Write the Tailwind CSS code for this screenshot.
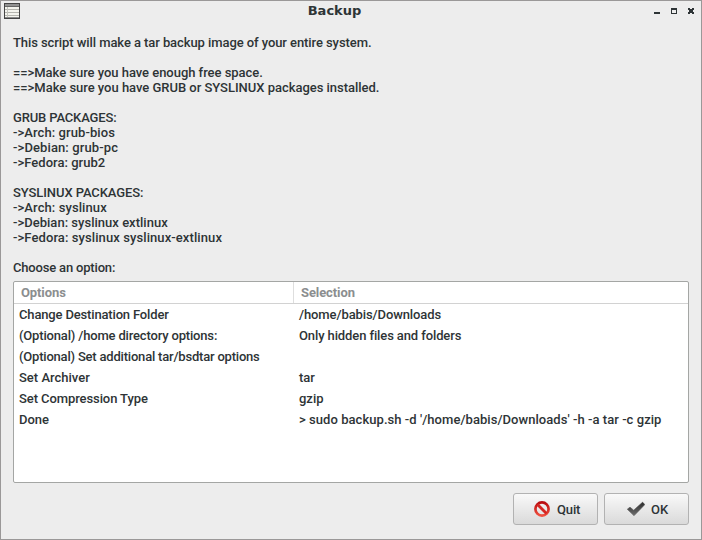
<!DOCTYPE html>
<html lang="en">
<head>
<meta charset="utf-8">
<title>Backup</title>
<script src="https://cdn.jsdelivr.net/npm/@tailwindcss/browser@4"></script>
</head>
<body class="w-[702px] h-[540px] overflow-hidden font-[Roboto,sans-serif] font-medium text-[13px] leading-[15px] text-[#2e3436]">
<div class="w-[702px] h-[540px] bg-[#ededed] border border-[#9a9898] flex flex-col">
  <header class="h-[34px] shrink-0 flex justify-between items-start">
    <svg class="ml-[3px] mt-[2px] w-4 h-4" viewBox="0 0 16 16" shape-rendering="crispEdges">
      <rect width="16" height="16" fill="#444"/>
      <rect x="1" y="1" width="14" height="2" fill="#929292"/>
      <rect x="1" y="3" width="14" height="1" fill="#666"/>
      <rect x="1" y="4" width="14" height="10" fill="#f4f4ee"/>
      <path d="M1 6.5h14M1 9.5h14M1 12.5h14" stroke="#b5b5af"/><path d="M3.5 4v10" stroke="#c4c4be"/>
      <path d="M1 14.5h14" stroke="#8a8a8a"/>
    </svg>
    <h1 class="font-['DejaVu_Sans',sans-serif] font-bold text-[13px] leading-[20px] pr-[5px]">Backup</h1>
    <div class="flex gap-[11px] mt-[7px] mr-[7px]">
      <svg class="w-[6px] h-[6px]" viewBox="0 0 6 6" shape-rendering="crispEdges"><path d="M0 4h6v2H0z" fill="#2e3436"/></svg>
      <svg class="w-[6px] h-[6px]" viewBox="0 0 6 6" shape-rendering="crispEdges"><path d="M0 0h6v6H0zM1 2v3h4V2z" fill="#2e3436" fill-rule="evenodd"/></svg>
      <svg class="w-[6px] h-[6px]" viewBox="0 0 6 6" shape-rendering="crispEdges"><path d="M0 0h2v1h2V0h2v2H5v2h1v2H4V5H2v1H0V4h1V2H0z" fill="#2e3436"/></svg>
    </div>
  </header>
  <main class="px-3 flex flex-col">
    <div class="whitespace-nowrap h-[240px] grid auto-rows-[15px]">
      <p class="tracking-[-0.077px]">This script will make a tar backup image of your entire system.</p>
      <p></p>
      <p class="tracking-[-0.035px]">==&gt;Make sure you have enough free space.</p>
      <p class="tracking-[-0.025px]">==&gt;Make sure you have GRUB or SYSLINUX packages installed.</p>
      <p></p>
      <p class="tracking-[-0.15px]">GRUB PACKAGES:</p>
      <p class="tracking-[0.08px]">-&gt;Arch: grub-bios</p>
      <p class="tracking-[0.11px]">-&gt;Debian: grub-pc</p>
      <p class="tracking-[0.03px]">-&gt;Fedora: grub2</p>
      <p></p>
      <p class="tracking-[-0.09px]">SYSLINUX PACKAGES:</p>
      <p class="tracking-[0.09px]">-&gt;Arch: syslinux</p>
      <p class="tracking-[0.02px]">-&gt;Debian: syslinux extlinux</p>
      <p class="tracking-[0.09px]">-&gt;Fedora: syslinux syslinux-extlinux</p>
      <p></p>
      <p class="tracking-[-0.18px]">Choose an option:</p>
    </div>
    <section class="mt-[6px] h-[202px] bg-white border border-[#a4a6a4] rounded-[2px]">
      <div class="h-[22px] border-b border-[#d2d2d2] flex text-[#8b8e8f] font-bold leading-[21px] tracking-[-0.1px]">
        <div class="w-[280px] pl-[7px] border-r border-[#dedede]">Options</div><div class="pl-[7px]">Selection</div>
      </div>
      <div class="grid grid-cols-[280px_1fr] auto-rows-[21px] leading-[21px] pl-[5px] whitespace-nowrap">
        <div class="tracking-[-0.16px]">Change Destination Folder</div><div class="tracking-[-0.1px]">/home/babis/Downloads</div>
        <div class="tracking-[-0.17px]">(Optional) /home directory options:</div><div class="tracking-[-0.11px]">Only hidden files and folders</div>
        <div class="tracking-[-0.2px]">(Optional) Set additional tar/bsdtar options</div><div></div>
        <div>Set Archiver</div><div>tar</div>
        <div class="tracking-[-0.09px]">Set Compression Type</div><div>gzip</div>
        <div>Done</div><div class="tracking-[0.05px]">&gt; sudo backup.sh -d '/home/babis/Downloads' -h -a tar -c gzip</div>
      </div>
    </section>
    <div class="mt-[10px] flex justify-end gap-[6px]">
      <button class="w-[85px] h-[32px] flex items-center pl-[20px] border border-[#b2b2b2] rounded-[3px] bg-linear-to-b from-[#f9f9f9] to-[#dadada]">
        <svg class="w-4 h-4 mr-[7px]" viewBox="0 0 16 16"><defs><linearGradient id="r" x2="0" y2="1"><stop stop-color="#b80c10"/><stop offset="1" stop-color="#f05040"/></linearGradient></defs><circle cx="8" cy="8" r="6.6" fill="none" stroke="url(#r)" stroke-width="2.7"/><path d="M3.5 3.5l9 9" stroke="#d42622" stroke-width="2.8"/></svg>
        <span class="tracking-[-0.15px]">Quit</span>
      </button>
      <button class="w-[85px] h-[32px] flex items-center pl-[22px] border border-[#b2b2b2] rounded-[3px] bg-linear-to-b from-[#f9f9f9] to-[#dadada]">
        <svg class="w-[18px] h-4 mr-[6px]" viewBox="0 0 18 16"><defs><linearGradient id="k" x2="0" y2="1"><stop stop-color="#2c2c2c"/><stop offset="1" stop-color="#707070"/></linearGradient></defs><path d="M0.3 8.2L3 6.2 6.7 9.2 15.6 1.2 17.8 3.6 7 14.8z" fill="url(#k)" stroke="url(#k)" stroke-width=".6" stroke-linejoin="round"/></svg>
        <span>OK</span>
      </button>
    </div>
  </main>
</div>
</body>
</html>
